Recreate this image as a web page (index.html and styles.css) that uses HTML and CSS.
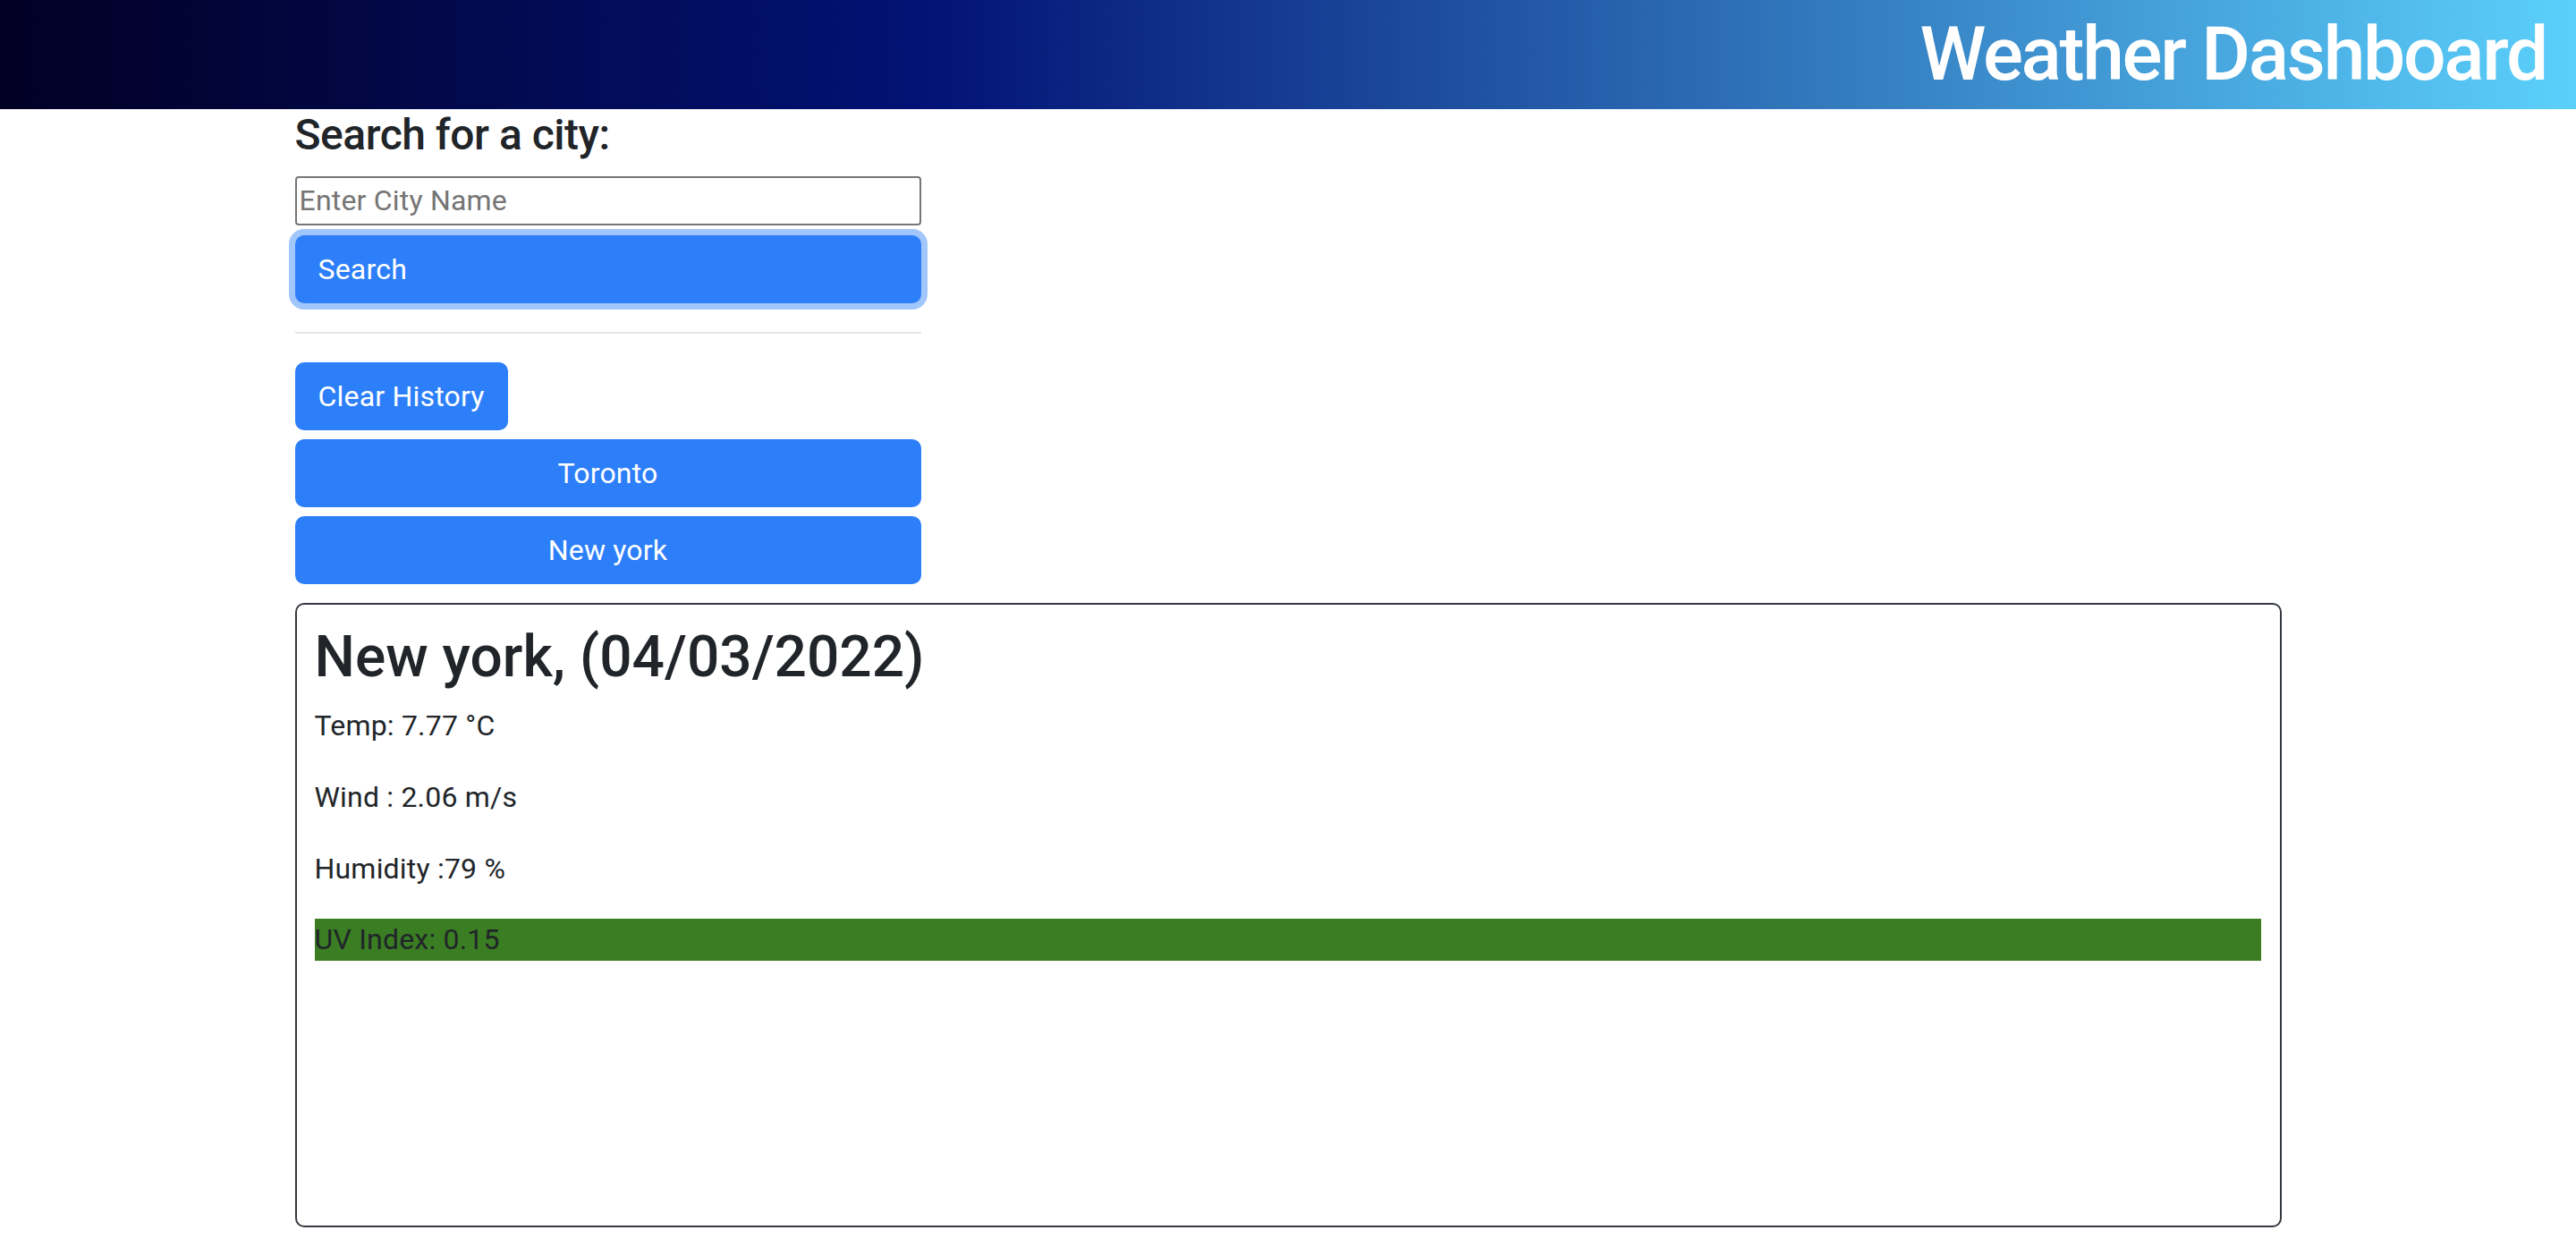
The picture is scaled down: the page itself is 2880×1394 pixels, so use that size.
FILE: index.html
```html
<!DOCTYPE html>
<html lang="en">
<head>
<meta charset="utf-8">
<title>Weather Dashboard</title>
<link rel="stylesheet" href="styles.css">
</head>
<body>
<header class="topbar">
  <h1 class="brand">Weather Dashboard</h1>
</header>
<main class="wrap">
  <section class="search">
    <h4 class="search-title">Search for a city:</h4>
    <input class="city-input" type="text" placeholder="Enter City Name">
    <button class="btn btn-search">Search</button>
    <hr class="divider">
    <div class="history">
      <button class="btn btn-clear">Clear History</button>
      <button class="btn btn-city">Toronto</button>
      <button class="btn btn-city">New york</button>
    </div>
  </section>
  <section class="card">
    <h2 class="card-title">New york, (04/03/2022)</h2>
    <p class="stat">Temp: 7.77 °C</p>
    <p class="stat">Wind : 2.06 m/s</p>
    <p class="stat">Humidity :79 %</p>
    <p class="uv">UV Index: 0.15</p>
  </section>
</main>
</body>
</html>
```
FILE: styles.css
```css
* { box-sizing: border-box; }
body {
  margin: 0;
  font-family: Roboto, "Liberation Sans", Arial, sans-serif;
  font-size: 32px;
  line-height: 1.5;
  letter-spacing: 0.2px;
  color: #212529;
  background: #fff;
}
.topbar {
  height: 122px;
  background: linear-gradient(90deg, #020024 0%, #021275 36%, #5bd0fb 100%);
  display: flex;
  justify-content: flex-end;
  align-items: center;
  padding-right: 33px;
}
.brand {
  margin: 0;
  color: #fff;
  font-size: 84px;
  font-weight: 500;
  line-height: 1.2;
  letter-spacing: -2.3px;
}
.wrap {
  width: 2221px;
  margin: 0 auto;
}
.search {
  width: 700px;
  display: flex;
  flex-direction: column;
}
.search-title {
  margin: 0 0 17px;
  font-size: 48px;
  font-weight: 500;
  line-height: 1.2;
  letter-spacing: -0.5px;
}
.city-input {
  width: 700px;
  height: 55px;
  border: 2px solid #767676;
  border-radius: 4px;
  padding: 0 3px;
  font-family: inherit;
  font-size: 32px;
  letter-spacing: 0.2px;
  color: #212529;
  margin: 0 0 11px;
}
.city-input::placeholder { color: #757575; }
.btn {
  height: 76px;
  border: 2px solid #2d7ff9;
  background: #2d7ff9;
  color: #fff;
  border-radius: 10px;
  font-family: inherit;
  font-size: 32px;
  letter-spacing: 0.2px;
  line-height: 1.5;
  padding: 0 24px;
}
.btn-search {
  width: 700px;
  text-align: left;
  box-shadow: 0 0 0 7px #a0c6fb;
}
.divider {
  width: 700px;
  margin: 32px 0;
  border: 0;
  border-top: 2px solid #e4e4e4;
}
.history {
  display: flex;
  flex-direction: column;
  align-items: flex-start;
  gap: 10px;
}
.btn-city {
  width: 700px;
  text-align: center;
}
.card {
  margin-top: 21px;
  height: 698px;
  border: 2px solid #343a40;
  border-radius: 10px;
  padding: 21px 21px 20px 20px;
}
.card-title {
  margin: 0 0 14px;
  font-size: 64px;
  font-weight: 500;
  line-height: 1.2;
  letter-spacing: 0;
}
.stat {
  margin: 0 0 32px;
}
.uv {
  margin: 0;
  background: #3a7d23;
  line-height: 47px;
}
```
